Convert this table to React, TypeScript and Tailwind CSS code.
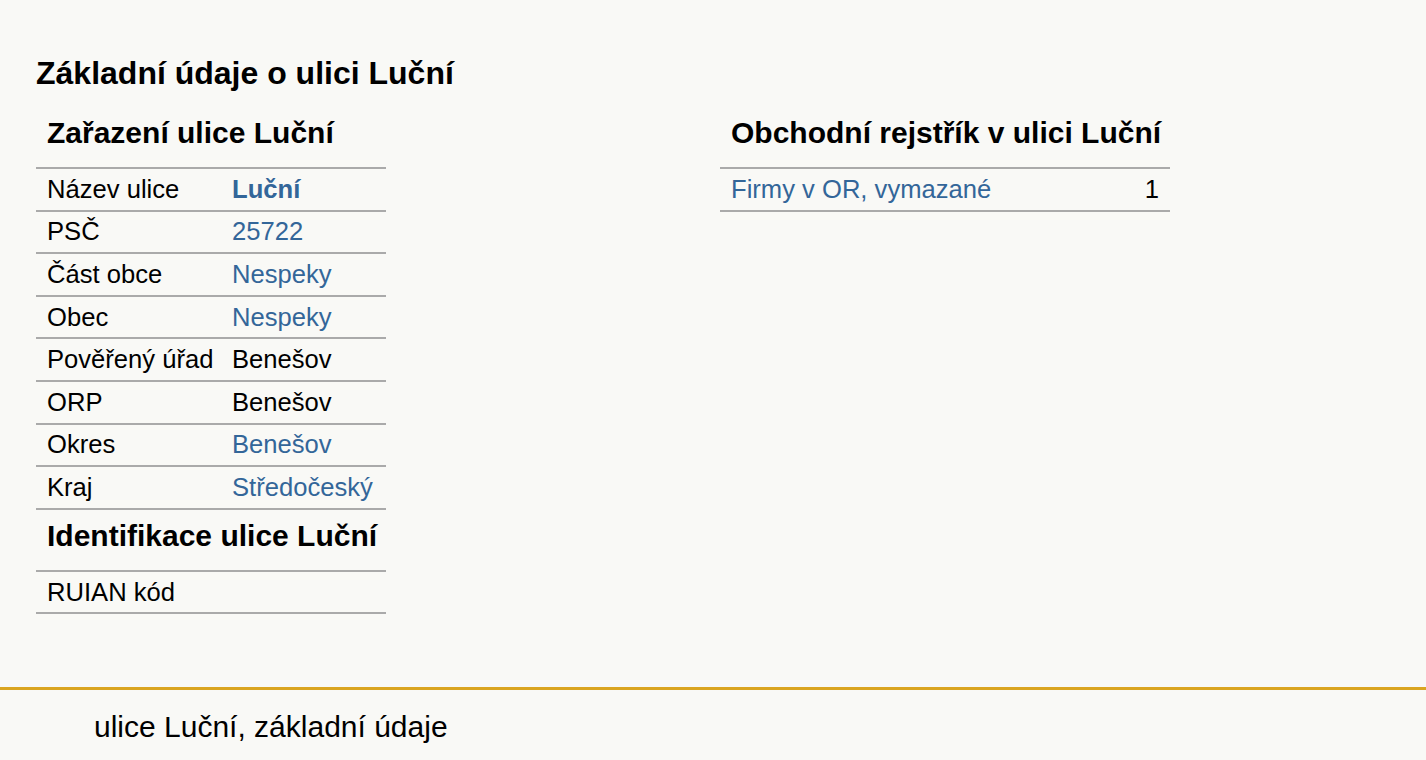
import React from "react";

type Row = { label: string; value: string; link?: boolean; bold?: boolean };

const zarazeni: Row[] = [
  { label: "Název ulice", value: "Luční", link: true, bold: true },
  { label: "PSČ", value: "25722", link: true },
  { label: "Část obce", value: "Nespeky", link: true },
  { label: "Obec", value: "Nespeky", link: true },
  { label: "Pověřený úřad", value: "Benešov" },
  { label: "ORP", value: "Benešov" },
  { label: "Okres", value: "Benešov", link: true },
  { label: "Kraj", value: "Středočeský", link: true },
];

const InfoRow = ({ row }: { row: Row }) => (
  <div className="flex h-[42.6px] items-center border-b-2 border-[#aaaaaa]">
    <div className="w-[185px] pl-[11px]">{row.label}</div>
    <div
      className={`pl-[11px] ${row.link ? "text-[#336699]" : ""} ${
        row.bold ? "font-bold" : ""
      }`}
    >
      {row.value}
    </div>
  </div>
);

const App = () => {
  return (
    <div className="min-h-screen bg-[#f9f9f6] text-black font-['Liberation_Sans',Arial,sans-serif]">
      <main className="h-[687px] pl-[36px] pt-[55px]">
        <h1 className="text-[32px] font-bold leading-[normal]">
          Základní údaje o ulici Luční
        </h1>

        <div className="flex text-[25.6px] leading-[normal]">
          {/* Left: classification + identification */}
          <div className="w-[684px]">
            <div className="w-[350px]">
              <h2 className="border-b-2 border-[#aaaaaa] pb-[17px] pl-[11px] pt-[24px] text-[30px] font-bold leading-[normal]">
                Zařazení ulice Luční
              </h2>
              {zarazeni.map((row) => (
                <InfoRow key={row.label} row={row} />
              ))}
              <h2 className="border-b-2 border-[#aaaaaa] pb-[17px] pl-[11px] pt-[9px] text-[30px] font-bold leading-[normal]">
                Identifikace ulice Luční
              </h2>
              <InfoRow row={{ label: "RUIAN kód", value: "" }} />
            </div>
          </div>

          {/* Right: business register */}
          <div className="w-[450px]">
            <h2 className="border-b-2 border-[#aaaaaa] pb-[17px] pl-[11px] pt-[24px] text-[30px] font-bold leading-[normal]">
              Obchodní rejstřík v ulici Luční
            </h2>
            <div className="flex h-[42.6px] items-center justify-between border-b-2 border-[#aaaaaa] px-[11px]">
              <span className="text-[#336699]">Firmy v OR, vymazané</span>
              <span>1</span>
            </div>
          </div>
        </div>
      </main>

      <footer className="border-t-[3px] border-[#daa520] pb-[14px] pl-[94px] pt-[20px] text-[30px] leading-[normal]">
        ulice Luční, základní údaje
      </footer>
    </div>
  );
};

export default App;
